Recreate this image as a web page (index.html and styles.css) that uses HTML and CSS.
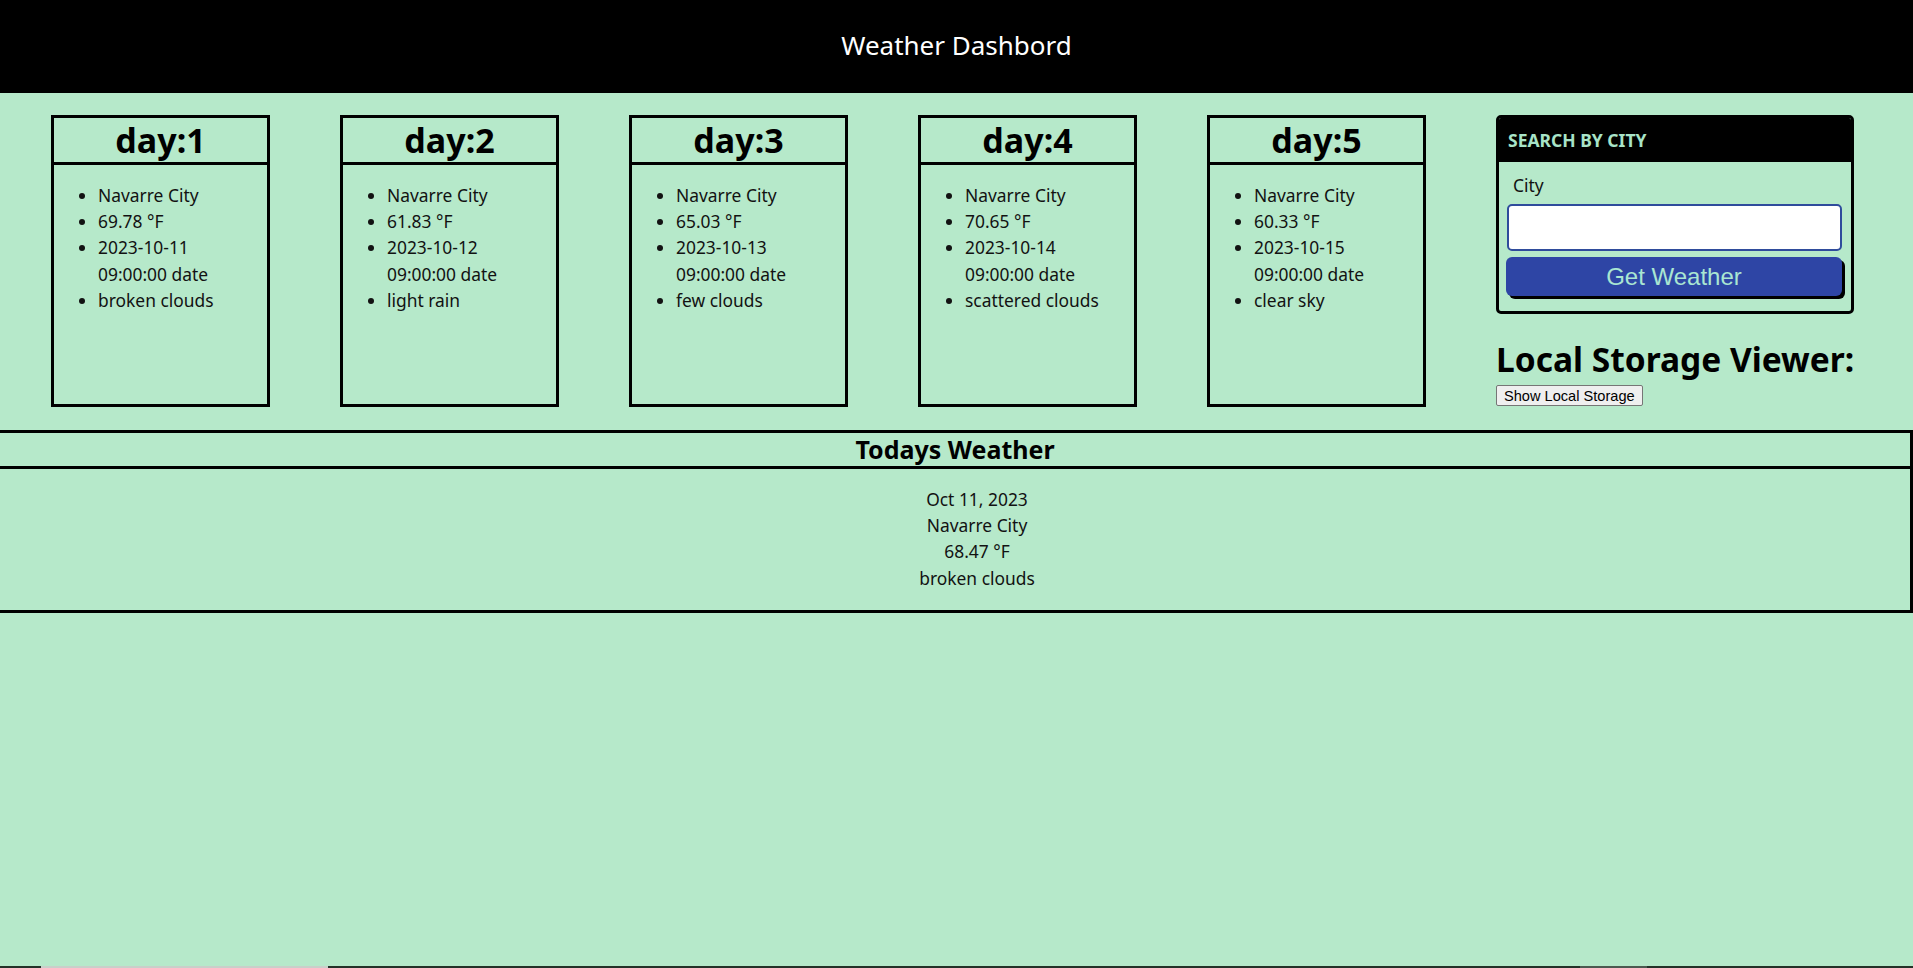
FILE: index.html
```html
<!DOCTYPE html>
<html lang="en">
<head>
<meta charset="utf-8">
<title>Weather Dashbord</title>
<link rel="stylesheet" href="styles.css">
</head>
<body>
<header class="top-bar">
  <h1 class="site-title">Weather Dashbord</h1>
</header>
<main class="main-row">
  <section class="forecast">
    <div class="card">
      <h2 class="card-title">day:1</h2>
      <ul class="card-list">
        <li>Navarre City</li>
        <li>69.78 °F</li>
        <li>2023-10-11 09:00:00 date</li>
        <li>broken clouds</li>
      </ul>
    </div>
    <div class="card">
      <h2 class="card-title">day:2</h2>
      <ul class="card-list">
        <li>Navarre City</li>
        <li>61.83 °F</li>
        <li>2023-10-12 09:00:00 date</li>
        <li>light rain</li>
      </ul>
    </div>
    <div class="card">
      <h2 class="card-title">day:3</h2>
      <ul class="card-list">
        <li>Navarre City</li>
        <li>65.03 °F</li>
        <li>2023-10-13 09:00:00 date</li>
        <li>few clouds</li>
      </ul>
    </div>
    <div class="card">
      <h2 class="card-title">day:4</h2>
      <ul class="card-list">
        <li>Navarre City</li>
        <li>70.65 °F</li>
        <li>2023-10-14 09:00:00 date</li>
        <li>scattered clouds</li>
      </ul>
    </div>
    <div class="card">
      <h2 class="card-title">day:5</h2>
      <ul class="card-list">
        <li>Navarre City</li>
        <li>60.33 °F</li>
        <li>2023-10-15 09:00:00 date</li>
        <li>clear sky</li>
      </ul>
    </div>
  </section>
  <aside class="side">
    <div class="search-box">
      <div class="search-head">SEARCH BY CITY</div>
      <div class="search-body">
        <label class="city-label" for="city">City</label>
        <input class="city-input" id="city" type="text">
        <button class="get-btn" type="button">Get Weather</button>
      </div>
    </div>
    <h2 class="storage-title">Local Storage Viewer:</h2>
    <button class="storage-btn" type="button">Show Local Storage</button>
  </aside>
</main>
<section class="today">
  <h2 class="today-title">Todays Weather</h2>
  <ul class="today-list">
    <li>Oct 11, 2023</li>
    <li>Navarre City</li>
    <li>68.47 °F</li>
    <li>broken clouds</li>
  </ul>
</section>
<div class="bottom-strip"></div>
</body>
</html>
```

FILE: styles.css
```css
html, body {
  margin: 0;
  padding: 0;
}

body {
  background: #b6e9ca;
  color: #121212;
  font-family: "Noto Sans", "Open Sans", sans-serif;
  font-size: 17.4px;
  line-height: 26.4px;
  overflow: hidden;
  min-height: 968px;
}

.top-bar {
  background: #000;
  height: 93px;
  display: flex;
  align-items: center;
  justify-content: center;
}

.site-title {
  margin: 0;
  color: #fff;
  font-weight: 400;
  font-size: 26px;
  line-height: 34px;
  padding-bottom: 4px;
}

.main-row {
  display: flex;
  align-items: flex-start;
  gap: 70px;
  padding: 22px 0 0 51px;
  height: 292px;
}

.forecast {
  display: flex;
  gap: 70px;
}

.card {
  width: 213px;
  height: 286px;
  border: 3px solid #000;
}

.card-title {
  margin: 0;
  height: 44px;
  line-height: 44px;
  text-align: center;
  font-size: 34px;
  font-weight: 700;
  border-bottom: 3px solid #000;
  color: #000;
}

.card-list {
  margin: 16.6px 0;
  padding-left: 44px;
  padding-right: 10px;
}

.side {
  width: 358px;
  display: flex;
  flex-direction: column;
  align-items: flex-start;
}

.search-box {
  width: 352px;
  border: 3px solid #000;
  border-radius: 5px;
  overflow: hidden;
}

.search-head {
  background: #000;
  color: #a8e4c8;
  font-weight: 700;
  font-size: 17.5px;
  height: 44px;
  line-height: 44px;
  padding-left: 9px;
}

.search-body {
  display: flex;
  flex-direction: column;
  padding: 10px 9px 15px 8px;
}

.city-label {
  padding-left: 6px;
  margin-bottom: 6px;
}

.city-input {
  box-sizing: border-box;
  width: 335px;
  height: 47px;
  border: 2px solid #2f4c9c;
  border-radius: 5px;
  background: #fff;
  margin: 0 0 6px 0;
  padding: 0 8px;
  font-size: 17.6px;
  outline: none;
}

.get-btn {
  box-sizing: border-box;
  width: 336px;
  height: 39px;
  margin-left: -1px;
  border: none;
  border-radius: 6px;
  background: #2e45a5;
  color: #a9e6d2;
  font-family: "Liberation Sans", Arial, sans-serif;
  font-size: 24px;
  box-shadow: 3px 3px 0 #000;
  padding: 0;
}

.storage-title {
  margin: 25px 0 6px 0;
  font-size: 33.5px;
  line-height: 40px;
  font-weight: 700;
  color: #000;
  white-space: nowrap;
}

.storage-btn {
  font-family: "Liberation Sans", Arial, sans-serif;
  font-size: 14.6px;
  line-height: 16px;
  padding: 1px 7px;
  height: 21px;
  background: #efefef;
  color: #000;
  border: 1px solid #767676;
  border-radius: 2px;
}

.today {
  margin: 23px 0 0 -3px;
  border: 3px solid #000;
}

.today-title {
  margin: 0;
  height: 33px;
  line-height: 33px;
  font-size: 25px;
  font-weight: 700;
  text-align: center;
  border-bottom: 3px solid #000;
  color: #000;
}

.today-list {
  list-style: none;
  margin: 16.6px 0 18.6px;
  padding-left: 44px;
  text-align: center;
}

.bottom-strip {
  position: fixed;
  left: 0;
  right: 0;
  bottom: 0;
  height: 2px;
  background: linear-gradient(to right,
    #243228 0, #243228 41px,
    #c9cfc9 41px, #c9cfc9 328px,
    #243228 328px, #243228 1580px,
    #4c5a50 1580px, #4c5a50 1647px,
    #243228 1647px);
}
```
